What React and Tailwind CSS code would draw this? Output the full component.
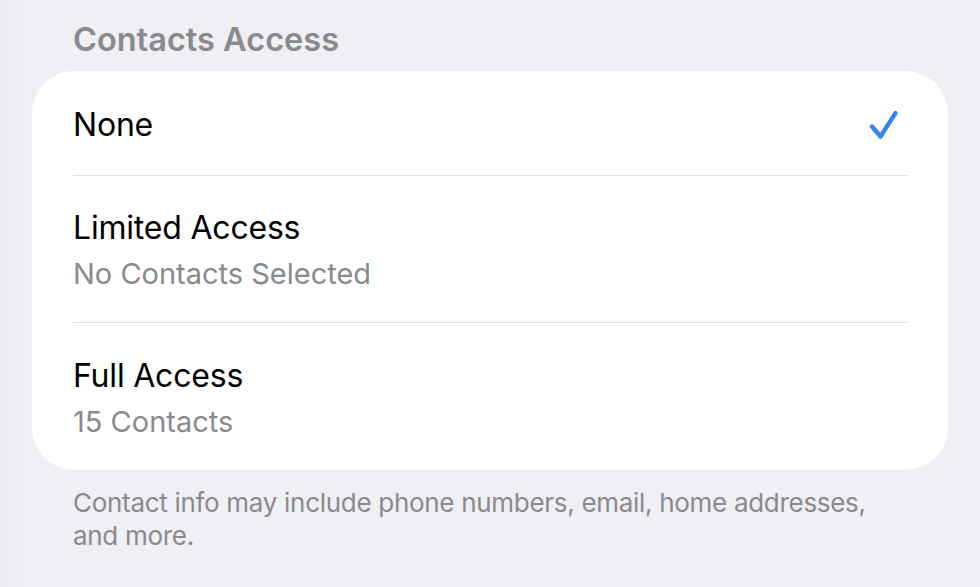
import React from "react";

const font = { fontFamily: "Inter, 'Noto Sans', sans-serif" };

export default function App() {
  return (
    <div
      className="w-[980px] h-[587px] overflow-hidden bg-[linear-gradient(to_right,#e9e9ee_0px,#efeff4_24px,#efeff4_100%)]"
      style={font}
    >
      <div className="pl-[73px] pt-[20px] h-[44px] box-content">
        <div className="text-[32.5px] leading-[40px] font-semibold text-[#8a8a8e] tracking-[0px]">
          Contacts Access
        </div>
      </div>
      <div className="ml-[32px] mt-[7px] w-[916px] h-[399px] bg-white rounded-[42px] pl-[41px] pr-[41px] flex flex-col">
        <div className="h-[105px] flex items-center justify-between border-b-[1.5px] border-[#e0e0e2]">
          <div className="text-[32px] leading-[36px] text-black tracking-[-0.2px] pt-[3px]">None</div>
          <svg width="40" height="40" viewBox="0 0 40 40" className="mr-[2px] mt-[10px]">
            <path d="M7 18.5 L15.5 28.5 L30.5 5" fill="none" stroke="#3880f6" strokeWidth="4.3" strokeLinecap="round" strokeLinejoin="round" />
          </svg>
        </div>
        <div className="h-[147px] flex flex-col justify-center border-b-[1.5px] border-[#e0e0e2] pt-[4px]">
          <div className="text-[32px] leading-[40px] text-black tracking-[-0.2px]">Limited Access</div>
          <div className="text-[29px] leading-[40px] text-[#8a8a8e] mt-[6px]">No Contacts Selected</div>
        </div>
        <div className="flex-1 flex flex-col justify-center pt-[4px]">
          <div className="text-[32px] leading-[40px] text-black tracking-[-0.2px]">Full Access</div>
          <div className="text-[29px] leading-[40px] text-[#8a8a8e] mt-[6px]">15 Contacts</div>
        </div>
      </div>
      <div className="pl-[73px] pr-[80px] pt-[16px] text-[26px] leading-[33px] text-[#8a8a8e] tracking-[-0.3px] whitespace-nowrap">
        Contact info may include phone numbers, email, home addresses,
        <br />
        and more.
      </div>
    </div>
  );
}
